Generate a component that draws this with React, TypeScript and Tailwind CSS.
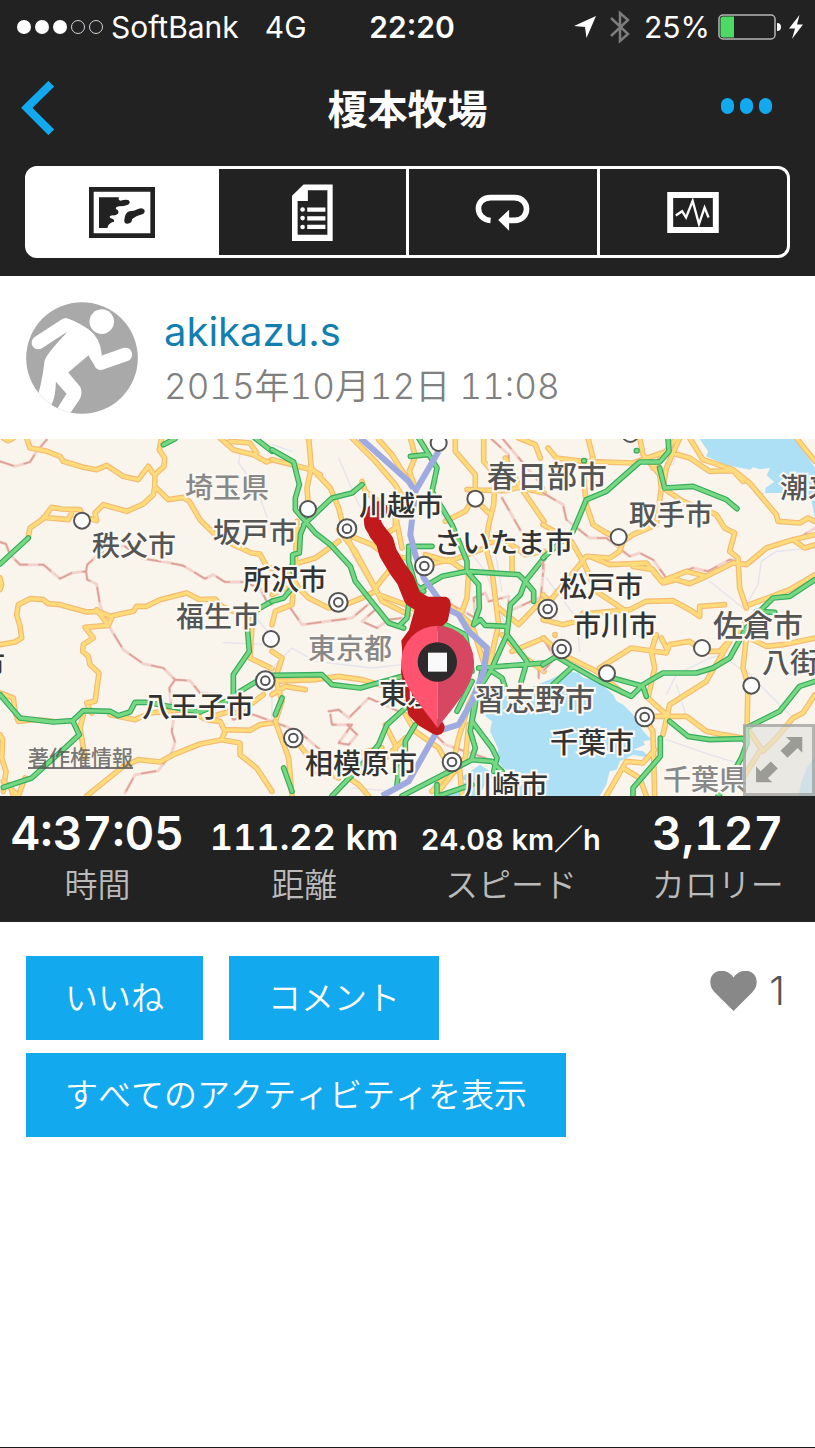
import React from 'react';

interface Place {
  name: string;
  x: number;
  y: number;
  tone: 'dark' | 'mid' | 'light';
  large?: boolean;
}

// Map coordinates of the labels, in a 815 x 357 frame
const places: Place[] = [
  { name: '埼玉県', x: 185, y: 49, tone: 'light' },
  { name: '秩父市', x: 92, y: 107, tone: 'mid' },
  { name: '坂戸市', x: 213, y: 94, tone: 'mid' },
  { name: '所沢市', x: 243, y: 141, tone: 'dark' },
  { name: '福生市', x: 176, y: 178, tone: 'mid' },
  { name: '市', x: -23, y: 226, tone: 'dark' },
  { name: '八王子市', x: 142, y: 268, tone: 'dark' },
  { name: '川越市', x: 359, y: 67, tone: 'dark' },
  { name: '春日部市', x: 487, y: 37, tone: 'mid', large: true },
  { name: 'さいたま市', x: 434, y: 104, tone: 'dark' },
  { name: '東京都', x: 308, y: 210, tone: 'light' },
  { name: '東京', x: 379, y: 255, tone: 'dark' },
  { name: '相模原市', x: 305, y: 325, tone: 'dark' },
  { name: '習志野市', x: 475, y: 260, tone: 'mid', large: true },
  { name: '川崎市', x: 464, y: 347, tone: 'dark' },
  { name: '潮来市', x: 780, y: 49, tone: 'mid' },
  { name: '取手市', x: 629, y: 76, tone: 'mid' },
  { name: '松戸市', x: 559, y: 148, tone: 'dark' },
  { name: '市川市', x: 573, y: 187, tone: 'dark' },
  { name: '佐倉市', x: 713, y: 186, tone: 'mid', large: true },
  { name: '八街市', x: 762, y: 224, tone: 'mid' },
  { name: '千葉市', x: 550, y: 304, tone: 'dark' },
  { name: '千葉県', x: 663, y: 341, tone: 'light' },
];

const toneClass = {
  dark: 'text-[#333333]',
  mid: 'text-[#555555]',
  light: 'text-[#888888]',
};

interface TileData {
  offset: number;
  roads: string;
  highways: string;
  borders: string;
  rails: string;
}

const tiles: TileData[] = [
  {
    offset: 0,
    roads:
      'M10 0L24 8L40 0M80 0L90 30L135 38L180 55L190 70L250 88L290 95L320 82L370 115L415 125L445 85L458 105 M485 0L478 35L494 60L492 85L465 110L464 145L505 185L550 178L568 190L600 245L640 285L700 320L755 345L780 348L800 385L816 392 M465 145L460 170L430 198L380 220L310 200L285 225L290 248L250 235L240 215L185 213L155 208L130 242L90 270L85 295 M130 238L205 245L215 225 M660 0L700 35L760 50L800 72L816 65 M690 10L750 15L770 45 M0 620L45 612L65 600L60 565L50 530L55 500L90 482L130 485L145 497L180 500L260 522L295 520L330 535L400 520L410 505L440 505L480 485L520 475L560 465L600 485L645 483L665 505L700 520L750 530 M290 515L325 562L335 540 M325 562L255 568L280 600L250 620L248 640L265 655L270 680L297 705L285 790L260 795L275 825 M0 420L5 440L0 455 M757 545L750 660L816 692 M0 765L40 780L45 820L55 850L100 845L160 850 M250 830L240 870L250 930L255 960 M330 830L380 840L405 845L450 825L500 820L560 815L620 845L660 850L675 880L665 905L720 915L720 950L770 990L816 1060 M675 875L750 877L780 860L816 855 M665 905L600 918L520 950L480 972L415 965L370 985L260 1074 M0 890L8 905L5 960L18 1000L10 1060 M10 1030L55 1074L75 1020 M30 1040L40 1074 M620 840L690 820L735 830L750 800L790 770',
    highways:
      'M0 378L85 300 M816 490L780 510L760 525 M742 570L748 640L700 710L700 770 M816 725L770 730L720 760L690 785L600 822L560 815L480 800L440 793L405 793L390 822L355 833L330 820L250 818L218 848L160 852L60 840L0 770 M218 848L238 890L195 930L150 970L95 1020L10 1048 M490 20L525 2 M765 0L816 40',
    borders:
      'M0 70L45 85L90 72L110 40L140 5 M0 312L18 318L30 350L60 380L130 380L180 422L215 405L258 400L262 425L290 438L300 500L315 545L370 635L430 677L490 690L525 725L570 728L600 765L650 768L700 845L760 830L816 850 M258 400L262 380L300 345L370 322L430 362L500 373L550 383L615 422L640 410L675 432L730 432L780 450L800 490L816 500 M525 725L508 750L520 850L515 880L525 912L515 945L475 998L405 1010L375 1065',
    rails: 'M720 50L716 75L770 150L816 280 M670 614L816 620 M740 500L816 600 M816 700L816 860',
  },
  {
    offset: 816,
    roads:
      'M110 0L118 90L175 150L200 210L215 270L240 330L280 400L320 470L400 500L440 520 M0 65L60 80L118 95L145 110 M118 90L105 150L108 190 M240 0L310 70L370 140L400 190 M320 5L360 50L410 130 M415 0L430 55L412 100L430 150 M550 0L550 40L610 110L610 160L600 185 M635 0L635 70L670 110L665 200L650 260L640 320L660 400L680 560L650 690 M585 155L700 158L740 148L816 165 M700 60L740 140L816 250 M740 0L790 20L805 60 M270 130L280 160L370 230L390 330 M225 290L300 320L340 350L400 360 M200 275L250 340L310 450L330 490L410 530 M50 400L80 450L110 480L170 510L220 500L270 480L310 460 M60 380L130 360L200 310 M75 250L70 380 M0 560L10 520L60 500L70 400 M0 640L30 660L10 720L30 790L10 850L50 960L60 1074 M0 730L130 725L200 715L270 725L340 745L410 790 M0 770L40 745L100 755 M400 830L430 880L500 930L540 1000 M460 350L530 370L640 330 M470 380L530 365L580 400 M590 400L585 480L570 520L530 515 M520 250L580 220L605 180L650 225 M480 1060L540 990L560 900L590 800L630 720 M500 1060L580 960L590 860 M130 1000L200 1000L260 1040L290 1074 M65 900L130 980L200 1020 M330 970L400 900 M720 640L816 600 M690 590L760 660L816 700 M530 500L600 560L640 690 M680 510L740 560L816 480 M640 320L690 300L760 350L816 340 M720 340L720 400 M370 230L370 270L320 300 M310 450L350 400L400 390 M340 860L370 920L370 980 M240 950L330 930 M0 470L40 450 M560 960L570 1074',
    highways:
      'M0 35L65 72L82 140L70 180L70 215L130 285L175 320L235 385L250 430L350 555L395 570 M95 260L180 180L240 165L270 140 M95 265L85 290L82 345L62 350L62 400 M0 490L35 480L60 450 M440 0L495 90L480 160L540 260L585 370L585 400 M415 55L465 50 M450 450L510 415L585 400L740 410L760 430L816 360 M480 325L410 325L410 370L430 440L455 460 M585 400L620 440L622 510L605 560L625 545L640 562L705 565L705 590 M760 430L745 470L715 500L705 590L660 690 M760 430L785 460L785 490 M705 590L765 670L745 740 M620 690L816 675 M410 500L405 540L385 560 M0 712L150 710L180 740L265 750L390 715 M400 810L345 860L320 920L270 980L180 1074 M430 860L400 910L400 950L380 1000L375 1040 M660 690L610 770L595 880L610 930L600 960 M630 700L600 850L660 930L675 960L665 1000 M390 1074L600 965L660 970L690 1000 M495 1074L495 1040 M500 1074L600 1040 M35 990L60 1060 M30 780L10 830 M500 550L580 590L600 700 M555 820L570 790L600 730 M660 700L690 720L700 750',
    borders:
      'M655 0L710 50L710 90 M690 180L770 320 M690 0L816 150 M55 510L90 560L240 540L300 490L310 515L270 550L315 570L350 545L390 540 M170 820L200 815L230 840L290 780L380 820 M175 830L180 860L240 860L200 915L230 920L255 890L225 860 M0 850L80 880L150 940 M520 490L610 540L605 480L640 465L650 490L710 475L710 520L800 480 M816 690L800 700L800 720 M430 830L520 920L640 960L690 1000 M805 490L816 380',
    rails:
      'M0 690L60 630L130 670L300 690L390 680 M200 60L260 200L340 290L470 480 M240 350L300 450 M470 180L640 400L700 560 M180 980L280 960 M0 20L60 40 M240 1050L370 1060 M650 230L690 460',
  },
  {
    offset: 1629,
    roads:
      'M15 30L40 60L120 70L270 75L370 40L440 60L500 100L570 98L600 130 M135 0L150 60L120 100L130 200L150 260L190 285L227 300 M290 0L300 50L350 110L355 150L340 260L270 290L240 310L230 340L200 360L130 355L110 380L20 490L0 470 M440 0L480 65L570 95L620 135L700 230L705 250L770 255L795 240L816 250 M410 0L370 90L360 150L420 190L520 230L545 270L575 285L560 340L585 360L590 450L610 510 M760 0L816 70 M0 260L85 310L120 370L160 460L250 520 M140 355L200 380L310 375L355 430L430 400L490 415L570 375L610 380L670 330L750 305L816 290 M270 385L330 395L360 435L400 425L440 437L490 415 M750 305L785 330L816 320 M150 525L260 515L310 490L390 488L440 515L470 535L470 505L545 500 M0 545L60 560L100 550L120 525L150 525 M36 590L36 592 M170 690L265 630L370 645L380 620L440 610L480 640L530 640L620 540 M340 590L325 640L335 690L315 780L370 830 M355 600L370 630 M0 600L60 650L160 700L240 765 M560 610L490 730L380 800L360 890 M330 835L430 835L490 880L540 890L600 900 M600 590L670 625L720 620L816 600 M610 600L600 690L615 740L612 870L660 940L700 900L750 840L780 825L816 770 M620 500L740 455L816 410 M305 840L330 880L335 1074 M335 935L300 975L250 970L190 1074 M240 990L290 1020L310 1074 M650 940L600 1020 M400 0L330 90',
    highways:
      'M375 0L378 40L350 72L290 72L190 160L130 185L90 280L0 360 M280 38L282 38 M122 68L124 68 M350 90L365 150L450 145L550 185L582 212 M816 425L740 475L690 480L650 520L610 570L560 660L510 690L460 705L360 705L300 740L265 775L170 730L90 685L30 740 M0 680L40 655L90 685 M190 715L300 745L310 775 M380 850L435 895L500 905L600 902L612 915L595 960L545 1050L525 1074 M352 900L352 955L270 1050L270 1074 M816 730L770 745L710 820L620 865 M610 870L612 915 M640 520L695 523',
    borders:
      'M0 165L60 200L70 245L140 300L190 300L260 355L290 345L330 365L370 420L450 390L495 400L560 365L620 378L690 320L760 305L816 270 M0 600L35 660L0 700 M0 350L0 400',
    rails:
      'M390 80L400 50 M816 330L700 340L655 370L645 440L610 500 M370 770L400 710L500 660L540 650L600 700 M370 905L500 950L600 980 M500 430L600 510 M10 420L100 540L110 640 M610 700L740 830 M430 835L400 740',
  },
];

const towns: [number, number][] = [
  [246, 248], [813, 603], [924, 213], [1316, 15], [1426, 182],
  [1891, -12], [1856, 297], [2106, 630], [1821, 706], [2254, 743],
];

const cities: [number, number][] = [
  [796, 728], [1041, 272], [1273, 384], [1015, 493], [880, 900],
  [1356, 972], [1643, 513], [1685, 633], [1934, 837],
];

const MapDrawing: React.FC = () => (
  <svg viewBox="0 3 2445 1071" className="block w-full h-full" aria-hidden="true">
    <rect width="2445" height="1080" fill="#f9f5ed" />
    <g fill="#aee0f5">
      <path d="M2097 0L2124 40L2119 55L2174 80L2250 95L2260 88L2280 94L2310 90L2300 112L2322 132L2296 150L2296 165L2279 170L2282 145L2279 165L2340 165L2430 170L2445 240V90L2389 0Z" />
      <path d="M1456 785L1450 830L1476 850L1470 880L1496 935L1486 960L1510 990L1556 1010L1540 1030L1496 1000L1470 1010L1500 1074H1799L1819 1040L1829 1000L1850 995L1860 970L1900 950L1950 960L1930 940L1900 935L1935 920L1930 910L1955 905L1930 880L1900 830L1870 800L1850 790L1840 770L1789 725L1750 720L1735 705L1700 700L1660 720L1600 745L1540 770Z" />
      <path d="M1330 1074L1400 1030L1380 1020L1440 980L1470 1000L1440 1074Z" />
      <path d="M2445 955L2420 990L2405 1030L2395 1074H2445Z" />
    </g>
    {tiles.map((tile) => (
      <g
        key={tile.offset}
        transform={`translate(${tile.offset} 0)`}
        fill="none"
        strokeLinejoin="round"
        strokeLinecap="round"
      >
        <path d={tile.rails} stroke="#e4e3ee" strokeWidth="4" />
        <path d={tile.borders} stroke="#f3d3cb" strokeWidth="9" />
        <path d={tile.borders} stroke="#dda097" strokeWidth="5" strokeDasharray="42 34" />
        <path d={tile.roads} stroke="#f3bb73" strokeWidth="17" />
        <path d={tile.roads} stroke="#ffdc79" strokeWidth="10" />
        <path d={tile.highways} stroke="#36ab5c" strokeWidth="17" />
        <path d={tile.highways} stroke="#76d883" strokeWidth="10" />
      </g>
    ))}
    <g transform="translate(816 0)" fill="none" stroke="#9fabe0" strokeWidth="18" strokeLinejoin="round">
      <path d="M265 0L410 130L430 160L415 290L430 350L455 420L520 510L560 530L590 580L645 630L635 700L600 790L560 860L495 880L410 1030L330 1074" />
      <path d="M500 40L430 160" />
    </g>
    <g fill="#ffffff" stroke="#555555" strokeWidth="6">
      {towns.map(([x, y]) => (
        <circle key={`${x}-${y}`} cx={x} cy={y} r="24" />
      ))}
      {cities.map(([x, y]) => (
        <g key={`${x}-${y}`}>
          <circle cx={x} cy={y} r="28" />
          <circle cx={x} cy={y} r="13" />
        </g>
      ))}
    </g>
    {/* recorded track */}
    <g transform="translate(816 0)" fill="#c01a1d" stroke="#c01a1d" strokeLinejoin="round" strokeLinecap="round">
      <path d="M322 215L300 230L303 260L318 285" fill="none" strokeWidth="52" />
      <path d="M318 285L338 310L348 345L378 395L400 425L422 480L455 500" fill="none" strokeWidth="54" />
      <path d="M440 500L460 484L520 484Q532 490 527 510L520 545L490 575L440 680L400 650L396 610L418 580Z" strokeWidth="16" />
      <path d="M415 630L410 700L422 770L430 820L455 845L495 868" fill="none" strokeWidth="46" />
    </g>
  </svg>
);

const PinIcon: React.FC = () => (
  <svg viewBox="387 562 220 310" className="block w-full h-full" aria-hidden="true">
    <path d="M497 564A109 109 0 0 0 388 673C388 745 445 800 497 871Z" fill="#ff5370" />
    <path d="M497 564A109 109 0 0 1 606 673C606 745 549 800 497 871Z" fill="#d84761" />
    <circle cx="496" cy="673" r="59" fill="#2d2a2b" />
    <path d="M468 645H525V702H468Z" fill="#fafafa" />
  </svg>
);

const MapIcon: React.FC = () => (
  <svg viewBox="260 110 198 153" className="w-[66px] h-[51px]" aria-hidden="true">
    <path d="M267 117H451V256H267Z" fill="none" stroke="#222222" strokeWidth="14" />
    <path
      d="M290 141H350Q346 150 355 151Q368 146 378 149Q387 156 377 163Q365 168 350 168Q338 170 341 176Q352 182 347 190Q340 196 330 195Q318 197 324 203Q338 207 335 214Q322 217 318 225L315 233H290Z"
      fill="#222222"
    />
    <path
      d="M366 208Q368 187 381 183Q395 183 407 176Q420 170 426 178Q430 186 420 192Q400 197 389 207Q389 220 375 220Q364 219 366 208Z"
      fill="#222222"
    />
  </svg>
);

const DetailsIcon: React.FC = () => (
  <svg viewBox="870 100 124 172" className="w-[41px] h-[57px]" aria-hidden="true">
    <path fillRule="evenodd" d="M905 101H993V272H870V135ZM918 119V151H887V253H977V119Z" fill="#ffffff" />
    <g fill="#ffffff">
      <circle cx="902" cy="177" r="7" />
      <circle cx="902" cy="203" r="7" />
      <circle cx="902" cy="230" r="7" />
      <path d="M916 171H971V184H916ZM916 197H971V210H916ZM916 223H971V236H916Z" />
    </g>
  </svg>
);

const LapsIcon: React.FC = () => (
  <svg viewBox="200 130 164 112" className="w-[55px] h-[37px]" aria-hidden="true">
    <path d="M246 210C197 206 197 141 246 141H318C367 141 367 210 318 210H298" fill="none" stroke="#ffffff" strokeWidth="17" />
    <path d="M269 209L302 178V241Z" fill="#ffffff" />
  </svg>
);

const GraphIcon: React.FC = () => (
  <svg viewBox="780 125 156 124" className="w-[52px] h-[41px]" aria-hidden="true">
    <path d="M789 134H927V240H789Z" fill="none" stroke="#ffffff" strokeWidth="18" />
    <path d="M806 196L825 183L837 202L857 152L876 222L893 172L905 202" fill="none" stroke="#ffffff" strokeWidth="7" />
  </svg>
);

const RunnerAvatar: React.FC = () => (
  <svg viewBox="77 48 337 337" className="w-28 h-28 shrink-0" role="img" aria-label="akikazu.s">
    <clipPath id="avatar">
      <circle cx="245.5" cy="216.5" r="168" />
    </clipPath>
    <g clipPath="url(#avatar)">
      <rect x="77" y="48" width="337" height="337" fill="#a9a9a9" />
      <circle cx="305" cy="107" r="37" fill="#ffffff" />
      <path d="M114 170L196 117" stroke="#ffffff" strokeWidth="40" strokeLinecap="round" />
      <path d="M302 232L376 206" stroke="#ffffff" strokeWidth="41" strokeLinecap="round" />
      <path
        d="M195 97Q215 98 265 130Q300 155 305 205L303 252Q288 252 265 208L204 260L240 303Q248 318 240 338L205 390L165 388L172 367L199 324L167 288Q166 335 153 358L170 367L150 395L100 370Q125 300 133 225Q138 205 198 142Z"
        fill="#ffffff"
      />
      <path d="M155 360L171 367L176 360L162 350Z" fill="#a9a9a9" />
    </g>
  </svg>
);

const StatusBar: React.FC = () => (
  <div className="grid grid-cols-[1fr_auto_1fr] items-center h-[54px] pl-[17px] pr-3 text-[30px] leading-9">
    <div className="flex items-center gap-2">
      <div className="flex gap-1">
        <span className="w-3.5 h-3.5 rounded-full bg-white" />
        <span className="w-3.5 h-3.5 rounded-full bg-white" />
        <span className="w-3.5 h-3.5 rounded-full bg-white" />
        <span className="w-3.5 h-3.5 rounded-full border border-gray-300" />
        <span className="w-3.5 h-3.5 rounded-full border border-gray-300" />
      </div>
      <span>SoftBank</span>
      <span className="ml-[18px]">4G</span>
    </div>
    <span className="pl-1 font-semibold">22:20</span>
    <div className="flex items-center justify-end">
      <svg viewBox="0 0 22 22" className="w-[22px] h-[22px] mr-3.5" aria-hidden="true">
        <path d="M22 0L12.500 22L11 11L0 10Z" fill="#ffffff" />
      </svg>
      <svg viewBox="0 0 20 34" className="w-5 h-[34px] mr-3.5" aria-hidden="true">
        <path d="M1 8L18 24L10 31V3L18 10L1 26" fill="none" stroke="#7d7d7d" strokeWidth="2.500" />
      </svg>
      <span>25%</span>
      <svg viewBox="0 0 63 26" className="w-[63px] h-[26px] ml-2" aria-hidden="true">
        <rect x="1" y="1" width="56" height="24" rx="4" fill="none" stroke="#b5b5b5" strokeWidth="1.500" />
        <path d="M5 2.500H16V23.500H5Q2.500 23.500 2.500 21V5Q2.500 2.500 5 2.500Z" fill="#4cd964" />
        <path d="M59 9Q63 9 63 13Q63 17 59 17Z" fill="#ffffff" />
      </svg>
      <svg viewBox="0 0 14 24" className="w-3.5 h-6 ml-2" aria-hidden="true">
        <path d="M10.500 0L0 13.500H6L3 24L14 9.500H8Z" fill="#ffffff" />
      </svg>
    </div>
  </div>
);

const tabs = [
  { label: '地図', icon: <MapIcon /> },
  { label: '詳細', icon: <DetailsIcon /> },
  { label: 'ラップ', icon: <LapsIcon /> },
  { label: 'グラフ', icon: <GraphIcon /> },
];

const Header: React.FC = () => (
  <header className="bg-[#222222] text-white pb-[18px]">
    <StatusBar />
    <div className="grid grid-cols-[1fr_auto_1fr] items-center h-[108px] pl-[21px] pr-[43px] mb-1">
      <button type="button" aria-label="戻る" className="justify-self-start">
        <svg viewBox="63 245 98 161" className="w-[33px] h-[54px]" aria-hidden="true">
          <path d="M153 253L80 325L153 398" fill="none" stroke="#12a9ef" strokeWidth="24" />
        </svg>
      </button>
      <h1 className="pl-[22px] pt-1 text-[40px] leading-[60px] font-bold">榎本牧場</h1>
      <button type="button" aria-label="メニュー" className="justify-self-end flex gap-1.5 pb-1">
        <span className="w-[13px] h-4 rounded-full bg-[#12a9ef]" />
        <span className="w-[13px] h-4 rounded-full bg-[#12a9ef]" />
        <span className="w-[13px] h-4 rounded-full bg-[#12a9ef]" />
      </button>
    </div>
    <nav className="grid grid-cols-4 gap-[3px] h-[92px] mx-[25px] border-[3px] border-white bg-white rounded-xl overflow-hidden">
      {tabs.map((tab, i) => (
        <button
          key={tab.label}
          type="button"
          aria-label={tab.label}
          className={`flex items-center justify-center ${i === 0 ? 'bg-white' : 'bg-[#222222]'}`}
        >
          {tab.icon}
        </button>
      ))}
    </nav>
  </header>
);

const ActivityMap: React.FC = () => (
  <section className="relative w-full aspect-[815/357] overflow-hidden">
    <MapDrawing />
    {places.map((place) => (
      <span
        key={place.name}
        className={`absolute -translate-y-1/2 whitespace-nowrap font-medium leading-9 [paint-order:stroke] [-webkit-text-stroke:4px_#fbf8f2] ${
          place.large ? 'text-[30px]' : 'text-[28px]'
        } ${toneClass[place.tone]}`}
        style={{ left: `${(place.x / 815) * 100}%`, top: `${(place.y / 357) * 100}%` }}
      >
        {place.name}
      </span>
    ))}
    <a href="#legal" className="absolute left-7 bottom-[22px] text-[21px] leading-8 font-medium text-[#555555]/80 underline">
      著作権情報
    </a>
    <div className="absolute left-[49.2%] top-[52.2%] w-[9%]">
      <PinIcon />
    </div>
    <button
      type="button"
      aria-label="地図を拡大"
      className="absolute right-0 bottom-0 w-[72px] h-[72px] border-[3px] border-[#8f8f8f]/60 bg-[#e2e0dc]/65"
    >
      <svg viewBox="609 867 197 197" className="w-full h-full" aria-hidden="true">
        <path
          d="M777 897V944L763 930L733 959L712 938L742 909L728 897ZM639 1032V985L653 999L683 970L704 991L674 1020L688 1032Z"
          fill="#9b9b98"
        />
      </svg>
    </button>
  </section>
);

const stats = [
  { label: '時間', value: '4:37:05', size: 'text-[46px]' },
  { label: '距離', value: '111.22 km', size: 'text-[36px]' },
  { label: 'スピード', value: '24.08 km／h', size: 'text-[29px]' },
  { label: 'カロリー', value: '3,127', size: 'text-[46px]' },
];

const Stats: React.FC = () => (
  <section className="bg-[#222222] overflow-hidden">
    <dl className="grid grid-cols-4 -mx-1.5 pt-2 pb-3.5 text-center whitespace-nowrap">
      {stats.map((stat) => (
        <div key={stat.label} className="flex flex-col-reverse justify-end items-center">
          <dt className="text-[33px] leading-[46px] font-[350] text-[#bbbbbb]">{stat.label}</dt>
          <dd className="h-[58px] text-[46px] leading-[58px] font-semibold text-white">
            <span className={`${stat.size} tabular-nums`}>{stat.value}</span>
          </dd>
        </div>
      ))}
    </dl>
  </section>
);

const ActionButton: React.FC<{ children: React.ReactNode }> = ({ children }) => (
  <button
    type="button"
    className="h-[84px] px-[39px] bg-[#12a9ef] text-white text-[33px] leading-[46px] font-[350] [font-kerning:none] whitespace-nowrap"
  >
    {children}
  </button>
);

export default function App() {
  return (
    <div className="min-h-screen bg-white border-b border-[#1a1a1a] font-['Inter','Noto_Sans_CJK_JP',sans-serif]">
      <Header />
      <section className="flex gap-[26px] px-[26px] pt-[26px] pb-[25px]">
        <RunnerAvatar />
        <div>
          <a href="#user" className="block text-[40px] leading-[60px] text-[#137fb0]">
            akikazu.s
          </a>
          <p className="text-[35px] leading-[48px] font-[350] tabular-nums text-[#808080]">2015年10月12日 11:08</p>
        </div>
      </section>
      <ActivityMap />
      <Stats />
      <section className="flex items-start justify-between pl-[26px] pr-[30px] pt-[34px]">
        <div>
          <div className="flex gap-[26px] mb-[13px]">
            <ActionButton>いいね</ActionButton>
            <ActionButton>コメント</ActionButton>
          </div>
          <ActionButton>すべてのアクティビティを表示</ActionButton>
        </div>
        <div className="flex items-center gap-3 pt-2.5 text-[40px] leading-[50px] font-light text-[#555555]">
          <svg viewBox="905 530 140 121" className="w-[47px] h-10" aria-hidden="true">
            <path
              d="M975 651L918 594C906 582 905 572 905 562C905 525 955 517 975 550C995 517 1045 525 1045 562C1045 572 1044 582 1032 594Z"
              fill="#888888"
            />
          </svg>
          <span>1</span>
        </div>
      </section>
    </div>
  );
}
